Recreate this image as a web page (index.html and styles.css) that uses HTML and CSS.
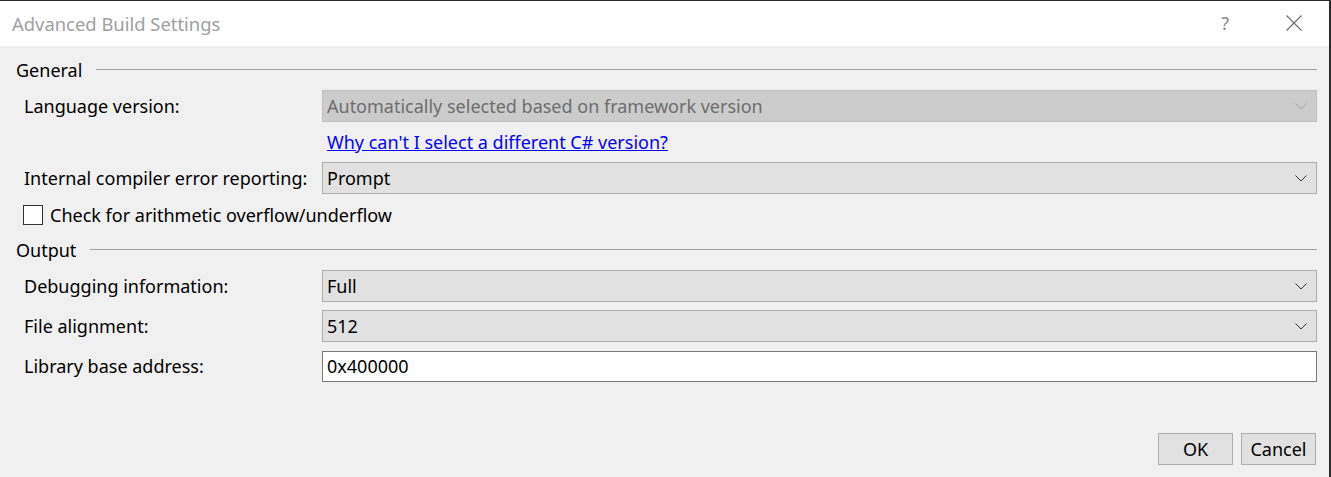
FILE: index.html
```html
<!DOCTYPE html>
<html>
<head>
<meta charset="utf-8">
<link rel="stylesheet" href="styles.css">
</head>
<body>
<div class="dialog">
  <div class="titlebar">
    <span class="title">Advanced Build Settings</span>
    <span class="help">?</span>
    <svg class="close" width="16" height="16" viewBox="0 0 16 16"><path d="M0.5 0.5 L15.5 15.5 M15.5 0.5 L0.5 15.5" stroke="#6a6a6a" stroke-width="1.1" fill="none"/></svg>
  </div>
  <div class="content">
    <div class="group-head"><span>General</span><div class="rule"></div></div>
    <div class="row">
      <label class="lbl">Language version:</label>
      <div class="combo disabled"><span>Automatically selected based on framework version</span>
        <svg class="chev" width="12" height="7" viewBox="0 0 12 7"><path d="M0.5 0.5 L6 6 L11.5 0.5" stroke="#a8a8a8" stroke-width="1" fill="none"/></svg></div>
    </div>
    <div class="row linkrow">
      <span class="lbl"></span>
      <a class="link" href="#">Why can't I select a different C# version?</a>
    </div>
    <div class="row">
      <label class="lbl">Internal compiler error reporting:</label>
      <div class="combo"><span>Prompt</span>
        <svg class="chev" width="12" height="7" viewBox="0 0 12 7"><path d="M0.5 0.5 L6 6 L11.5 0.5" stroke="#333" stroke-width="1" fill="none"/></svg></div>
    </div>
    <div class="checkrow">
      <span class="box"></span><span>Check for arithmetic overflow/underflow</span>
    </div>
    <div class="group-head out"><span>Output</span><div class="rule"></div></div>
    <div class="row">
      <label class="lbl">Debugging information:</label>
      <div class="combo"><span>Full</span>
        <svg class="chev" width="12" height="7" viewBox="0 0 12 7"><path d="M0.5 0.5 L6 6 L11.5 0.5" stroke="#333" stroke-width="1" fill="none"/></svg></div>
    </div>
    <div class="row">
      <label class="lbl">File alignment:</label>
      <div class="combo"><span>512</span>
        <svg class="chev" width="12" height="7" viewBox="0 0 12 7"><path d="M0.5 0.5 L6 6 L11.5 0.5" stroke="#333" stroke-width="1" fill="none"/></svg></div>
    </div>
    <div class="row">
      <label class="lbl">Library base address:</label>
      <div class="textbox">0x400000</div>
    </div>
    <div class="buttons">
      <button class="btn">OK</button>
      <button class="btn">Cancel</button>
    </div>
  </div>
</div>
</body>
</html>
```
FILE: styles.css
```css
html, body {
  margin: 0;
  padding: 0;
  background: #2b2b2b;
}
body {
  font-family: "Noto Sans", "Liberation Sans", sans-serif;
  font-size: 18px;
  color: #000;
}
.dialog {
  width: 1329px;
  height: 476px;
  margin-top: 1px;
  background: #f0f0f0;
  overflow: hidden;
}
.titlebar {
  height: 45px;
  background: #fff;
  display: flex;
  align-items: center;
  padding-left: 12px;
  box-sizing: border-box;
}
.title {
  color: #a0a0a0;
  font-size: 18.4px;
  flex: 1;
  margin-top: -1px;
}
.help {
  color: #8a8a8a;
  font-size: 18px;
  margin-right: 57px;
  margin-top: -2px;
}
.close {
  margin-right: 27px;
  margin-top: -2px;
}
.content {
  padding: 0 12px 0 16px;
}
.group-head {
  display: flex;
  align-items: center;
  height: 24px;
  margin-top: 12px;
}
.group-head .rule {
  flex: 1;
  height: 1px;
  background: #a0a0a0;
  margin-left: 14px;
  margin-top: -2px;
}
.group-head.out { margin-top: 8px; }
.row {
  display: flex;
  align-items: center;
  height: 32px;
  margin-top: 8px;
  padding-left: 8px;
}
.row.linkrow { height: 28px; margin-top: 6px; }
.linkrow + .row { margin-top: 6px; }
.lbl {
  width: 298px;
  flex: none;
}
.combo {
  flex: 1;
  height: 32px;
  box-sizing: border-box;
  border: 1px solid #adadad;
  background: #e1e1e1;
  display: flex;
  align-items: center;
  padding: 0 9px 0 4px;
}
.combo span { flex: 1; }
.combo.disabled {
  background: #cccccc;
  border-color: #bfbfbf;
  color: #6d6d6d;
}
.chev { margin-top: 1px; }
.link {
  color: #0000ff;
  text-decoration: underline;
  padding-left: 5px;
}
.textbox {
  flex: 1;
  height: 31px;
  box-sizing: border-box;
  border: 1px solid #7a7a7a;
  background: #fff;
  display: flex;
  align-items: center;
  padding-left: 4px;
}
.checkrow {
  display: flex;
  align-items: center;
  height: 30px;
  margin-top: 6px;
  padding-left: 7px;
}
.box {
  width: 18px;
  height: 18px;
  border: 1px solid #333;
  background: #fff;
  margin-right: 7px;
}
.buttons {
  display: flex;
  justify-content: flex-end;
  gap: 8px;
  margin-top: 51px;
  padding-right: 1px;
}
.btn {
  width: 75px;
  height: 32px;
  box-sizing: border-box;
  border: 1px solid #adadad;
  background: #e1e1e1;
  font-family: inherit;
  font-size: 18px;
  color: #000;
  padding: 0;
}
```
